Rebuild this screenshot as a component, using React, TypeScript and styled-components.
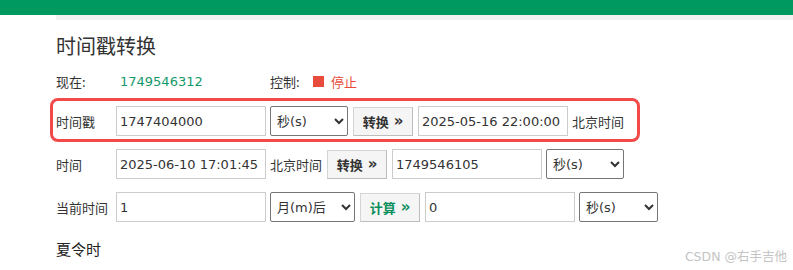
import React from "react";
import styled, { createGlobalStyle } from "styled-components";

const Global = createGlobalStyle`
  html, body { margin: 0; padding: 0; background: #fff; }
  body {
    font-family: "DejaVu Sans", "Noto Sans CJK SC", sans-serif;
    font-size: 13px;
    color: #333;
  }
  * { box-sizing: border-box; }
`;

const Page = styled.div`
  position: relative;
  width: 793px;
  height: 270px;
  overflow: hidden;
`;

const TopBar = styled.div`
  height: 15px;
  background: #009a61;
`;

const Content = styled.div`
  padding-left: 56px;
  display: flex;
  flex-direction: column;
`;

const SubBar = styled.div`
  height: 5px;
  background: #f2f2f3;
`;

const Title = styled.h1`
  margin: 12px 0 0 0;
  height: 28px;
  line-height: 28px;
  font-size: 20px;
  font-weight: normal;
  color: #333;
  font-family: "Noto Sans CJK SC", sans-serif;
`;

const StatusRow = styled.div`
  display: flex;
  align-items: center;
  height: 20px;
  margin-top: 11px;
`;

const StatusLabel = styled.span<{ $w: number }>`
  width: ${(p) => p.$w}px;
  font-family: "Noto Sans CJK SC", sans-serif;
  color: #333;
`;

const NowValue = styled.span`
  width: 150px;
  color: #14996a;
`;

const StopSquare = styled.span`
  width: 11px;
  height: 11px;
  background: #e74c3c;
  margin: 0 7px 0 0;
`;

const StopText = styled.span`
  color: #e74c3c;
  font-family: "Noto Sans CJK SC", sans-serif;
`;

const Row = styled.div<{ $highlight?: boolean; $mt: number }>`
  display: flex;
  align-items: center;
  gap: 4px;
  height: 30px;
  margin-top: ${(p) => p.$mt}px;
  ${(p) =>
    p.$highlight &&
    `
    height: 44px;
    width: 590px;
    margin-left: -6px;
    padding: 5px 3px 3px 3px;
    border: 3px solid #f24a4a;
    border-radius: 8px;
  `}
`;

const RowLabel = styled.span`
  width: 56px;
  font-family: "Noto Sans CJK SC", sans-serif;
  color: #333;
`;

const Input = styled.input`
  width: 150px;
  height: 30px;
  border: 1px solid #cccccc;
  padding: 0 3px;
  font-family: "DejaVu Sans", "Noto Sans CJK SC", sans-serif;
  font-size: 13px;
  color: #333;
  background: #fff;
  outline: none;
`;

const Select = styled.select<{ $w: number }>`
  width: ${(p) => p.$w}px;
  height: 30px;
  border: 1px solid #767676;
  border-radius: 2px;
  padding: 0 0 0 2px;
  font-family: "DejaVu Sans", "Noto Sans CJK SC", sans-serif;
  font-size: 13px;
  color: #333;
  background: #fff;
`;

const Button = styled.button<{ $green?: boolean }>`
  height: 29px;
  width: 60px;
  margin: 0 1px;
  padding: 0;
  display: flex;
  align-items: center;
  justify-content: center;
  gap: 5px;
  border: 1px solid #d4d4d4;
  border-right-color: #bdbdbd;
  border-bottom-color: #bdbdbd;
  background: #f5f5f5;
  font-family: "Noto Sans CJK SC", sans-serif;
  font-size: 13px;
  font-weight: bold;
  color: ${(p) => (p.$green ? "#0a8f5c" : "#333")};
  cursor: pointer;
`;

const Chevrons = styled.span`
  font-family: "DejaVu Sans", sans-serif;
  font-size: 15px;
  font-weight: bold;
  line-height: 1;
`;

const Zone = styled.span`
  font-family: "Noto Sans CJK SC", sans-serif;
  color: #333;
`;

const Section = styled.div`
  margin-top: 16px;
  font-family: "Noto Sans CJK SC", sans-serif;
  font-size: 15px;
  color: #222;
  font-weight: normal;
`;

const Watermark = styled.div`
  position: absolute;
  right: 6px;
  bottom: 5px;
  font-family: "DejaVu Sans", "Noto Sans CJK SC", sans-serif;
  font-size: 12.5px;
  color: #c4c4c4;
`;

export default function App() {
  return (
    <Page>
      <Global />
      <TopBar />
      <Content>
        <SubBar />
        <Title>时间戳转换</Title>
        <StatusRow>
          <StatusLabel $w={64}>现在:</StatusLabel>
          <NowValue>1749546312</NowValue>
          <StatusLabel $w={43}>控制:</StatusLabel>
          <StopSquare />
          <StopText>停止</StopText>
        </StatusRow>
        <Row $highlight $mt={7}>
          <RowLabel>时间戳</RowLabel>
          <Input defaultValue="1747404000" />
          <Select $w={78} defaultValue="s">
            <option value="s">秒(s)</option>
            <option value="ms">毫秒(ms)</option>
          </Select>
          <Button>
            转换<Chevrons>»</Chevrons>
          </Button>
          <Input defaultValue="2025-05-16 22:00:00" />
          <Zone>北京时间</Zone>
        </Row>
        <Row $mt={7}>
          <RowLabel>时间</RowLabel>
          <Input defaultValue="2025-06-10 17:01:45" />
          <Zone>北京时间</Zone>
          <Button>
            转换<Chevrons>»</Chevrons>
          </Button>
          <Input defaultValue="1749546105" />
          <Select $w={78} defaultValue="s">
            <option value="s">秒(s)</option>
            <option value="ms">毫秒(ms)</option>
          </Select>
        </Row>
        <Row $mt={13}>
          <RowLabel>当前时间</RowLabel>
          <Input defaultValue="1" />
          <Select $w={85} defaultValue="m">
            <option value="m">月(m)后</option>
            <option value="d">天(d)后</option>
          </Select>
          <Button $green>
            计算<Chevrons>»</Chevrons>
          </Button>
          <Input defaultValue="0" />
          <Select $w={79} defaultValue="s">
            <option value="s">秒(s)</option>
            <option value="ms">毫秒(ms)</option>
          </Select>
        </Row>
        <Section>夏令时</Section>
      </Content>
      <Watermark>CSDN @右手吉他</Watermark>
    </Page>
  );
}
